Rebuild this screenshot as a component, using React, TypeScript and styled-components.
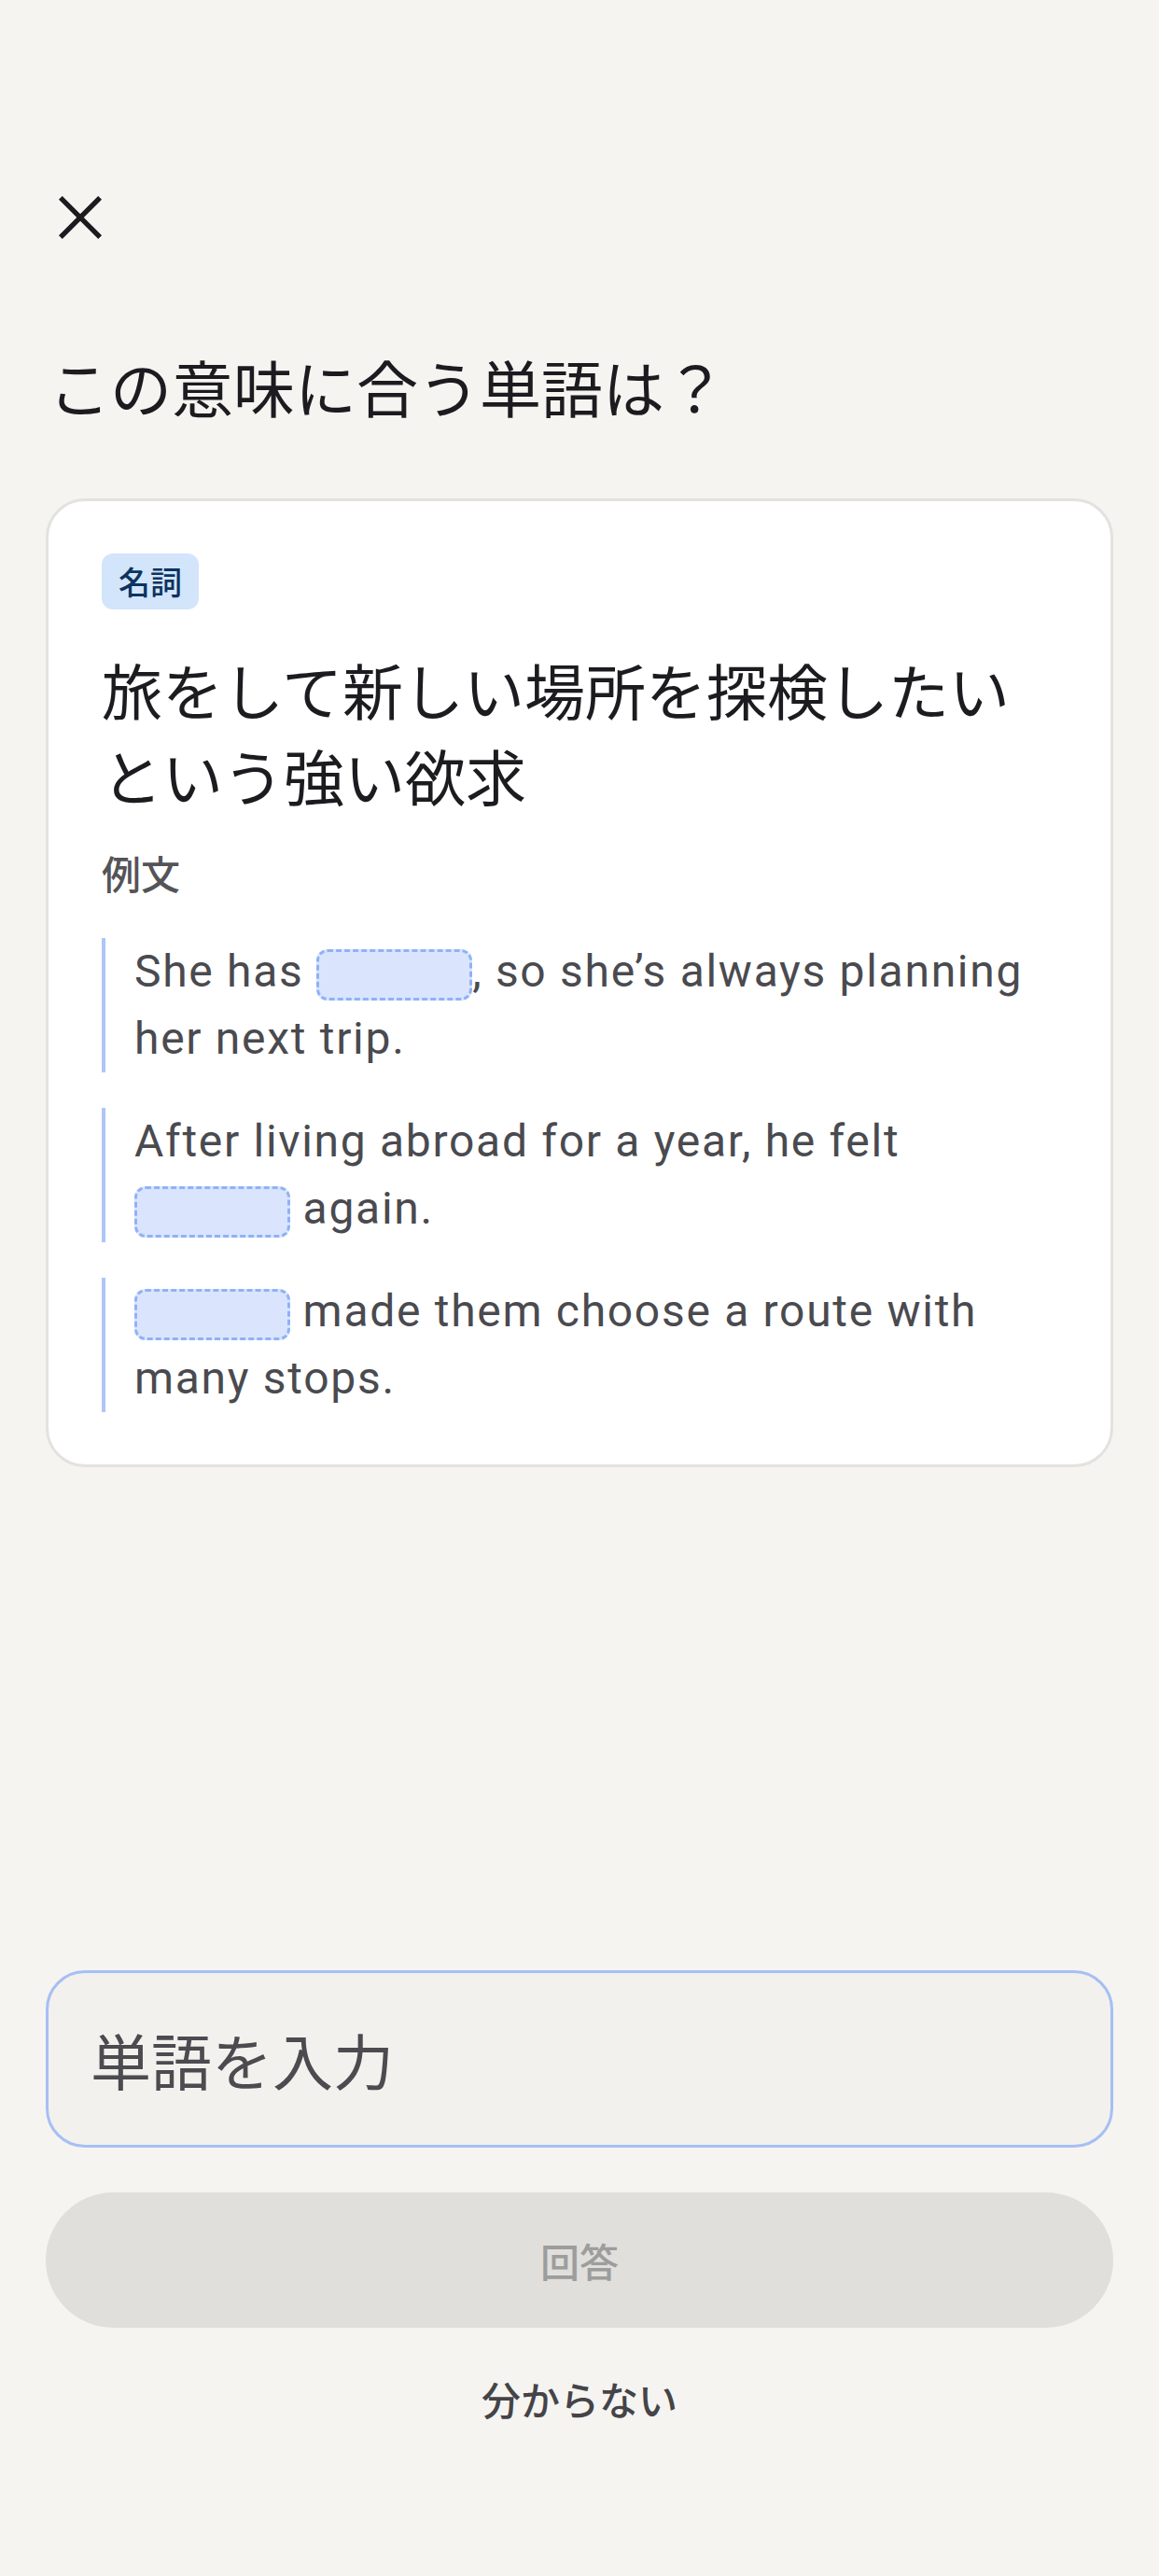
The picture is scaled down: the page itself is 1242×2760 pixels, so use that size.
import React from "react";
import styled, { createGlobalStyle } from "styled-components";

const GlobalStyle = createGlobalStyle`
  html, body {
    margin: 0;
    padding: 0;
    background: #f5f4f0;
  }
  body {
    font-family: Roboto, "Noto Sans CJK JP", sans-serif;
    -webkit-font-smoothing: antialiased;
  }
  * { box-sizing: border-box; }
`;

const jp = `"Noto Sans CJK JP", Roboto, sans-serif`;

const Page = styled.div`
  min-height: 2760px;
  display: flex;
  flex-direction: column;
  padding: 197px 49px 142px;
  background: #f5f4f0;
`;

const CloseButton = styled.button`
  width: 72px;
  height: 72px;
  padding: 0;
  margin: 0 0 0 1px;
  border: none;
  background: transparent;
  display: flex;
  align-items: center;
  justify-content: center;
  color: #1c1b1f;
  cursor: pointer;
`;

const Title = styled.h1`
  margin: 99px 0 0 3px;
  font-family: ${jp};
  font-size: 66px;
  font-weight: 400;
  line-height: 90px;
  color: #1c1b1f;
`;

const Card = styled.section`
  margin-top: 76px;
  background: #ffffff;
  border: 3px solid #e4e2de;
  border-radius: 42px;
  padding: 56px 57px;
  display: flex;
  flex-direction: column;
  align-items: flex-start;
`;

const Badge = styled.span`
  display: inline-block;
  background: #d3e5fb;
  color: #0b3460;
  font-family: ${jp};
  font-size: 34px;
  font-weight: 500;
  line-height: 44px;
  padding: 8px 18px;
  border-radius: 12px;
`;

const Definition = styled.p`
  margin: 39px 0 0;
  font-family: ${jp};
  font-size: 65px;
  font-weight: 400;
  line-height: 92px;
  color: #1c1b1f;
`;

const SectionLabel = styled.h2`
  margin: 27px 0 0;
  font-family: ${jp};
  font-size: 42px;
  font-weight: 500;
  line-height: 63px;
  color: #545458;
`;

const Examples = styled.div`
  margin-top: 39px;
  align-self: stretch;
  display: flex;
  flex-direction: column;
  gap: 38px;
`;

const Example = styled.p`
  margin: 0;
  border-left: 4px solid #adc6f8;
  padding-left: 31px;
  font-family: Roboto, "Noto Sans CJK JP", sans-serif;
  font-size: 48px;
  line-height: 72px;
  letter-spacing: 1.7px;
  color: #4a4a4f;
`;

const Blank = styled.span`
  display: inline-block;
  width: 167px;
  height: 55px;
  vertical-align: middle;
  background: #dae5fd;
  border: 3px dashed #8fb2f7;
  border-radius: 12px;
`;

const Bottom = styled.div`
  margin-top: auto;
  display: flex;
  flex-direction: column;
`;

const AnswerInput = styled.input`
  width: 100%;
  height: 190px;
  border: 3px solid #a6bff4;
  border-radius: 42px;
  background: #f2f1ed;
  padding: 0 45px;
  font-family: ${jp};
  font-size: 65px;
  color: #1c1b1f;
  outline: none;
  &::placeholder {
    color: #4b4b50;
  }
`;

const SubmitButton = styled.button`
  margin-top: 48px;
  height: 145px;
  border: none;
  border-radius: 73px;
  background: #e0dfdb;
  color: #9d9d9d;
  font-family: ${jp};
  font-size: 42px;
  font-weight: 500;
  line-height: 60px;
`;

const SkipButton = styled.button`
  margin-top: 28px;
  align-self: center;
  border: none;
  background: transparent;
  padding: 18px 24px;
  font-family: ${jp};
  font-size: 42px;
  font-weight: 500;
  line-height: 60px;
  color: #444448;
`;

const CloseIcon = () => (
  <svg width="72" height="72" viewBox="0 0 24 24" fill="none">
    <path
      d="M5.6 5.6 L18.4 18.4 M18.4 5.6 L5.6 18.4"
      stroke="currentColor"
      strokeWidth="1.8"
      strokeLinecap="square"
    />
  </svg>
);

const examples: React.ReactNode[] = [
  <>
    She has <Blank />, so she’s always planning her next trip.
  </>,
  <>
    After living abroad for a year, he felt <Blank /> again.
  </>,
  <>
    <Blank /> made them choose a route with many stops.
  </>,
];

export default function App() {
  return (
    <>
      <GlobalStyle />
      <Page>
        <CloseButton aria-label="閉じる">
          <CloseIcon />
        </CloseButton>
        <Title>この意味に合う単語は？</Title>
        <Card>
          <Badge>名詞</Badge>
          <Definition>旅をして新しい場所を探検したいという強い欲求</Definition>
          <SectionLabel>例文</SectionLabel>
          <Examples>
            {examples.map((ex, i) => (
              <Example key={i}>{ex}</Example>
            ))}
          </Examples>
        </Card>
        <Bottom>
          <AnswerInput placeholder="単語を入力" />
          <SubmitButton disabled>回答</SubmitButton>
          <SkipButton>分からない</SkipButton>
        </Bottom>
      </Page>
    </>
  );
}
